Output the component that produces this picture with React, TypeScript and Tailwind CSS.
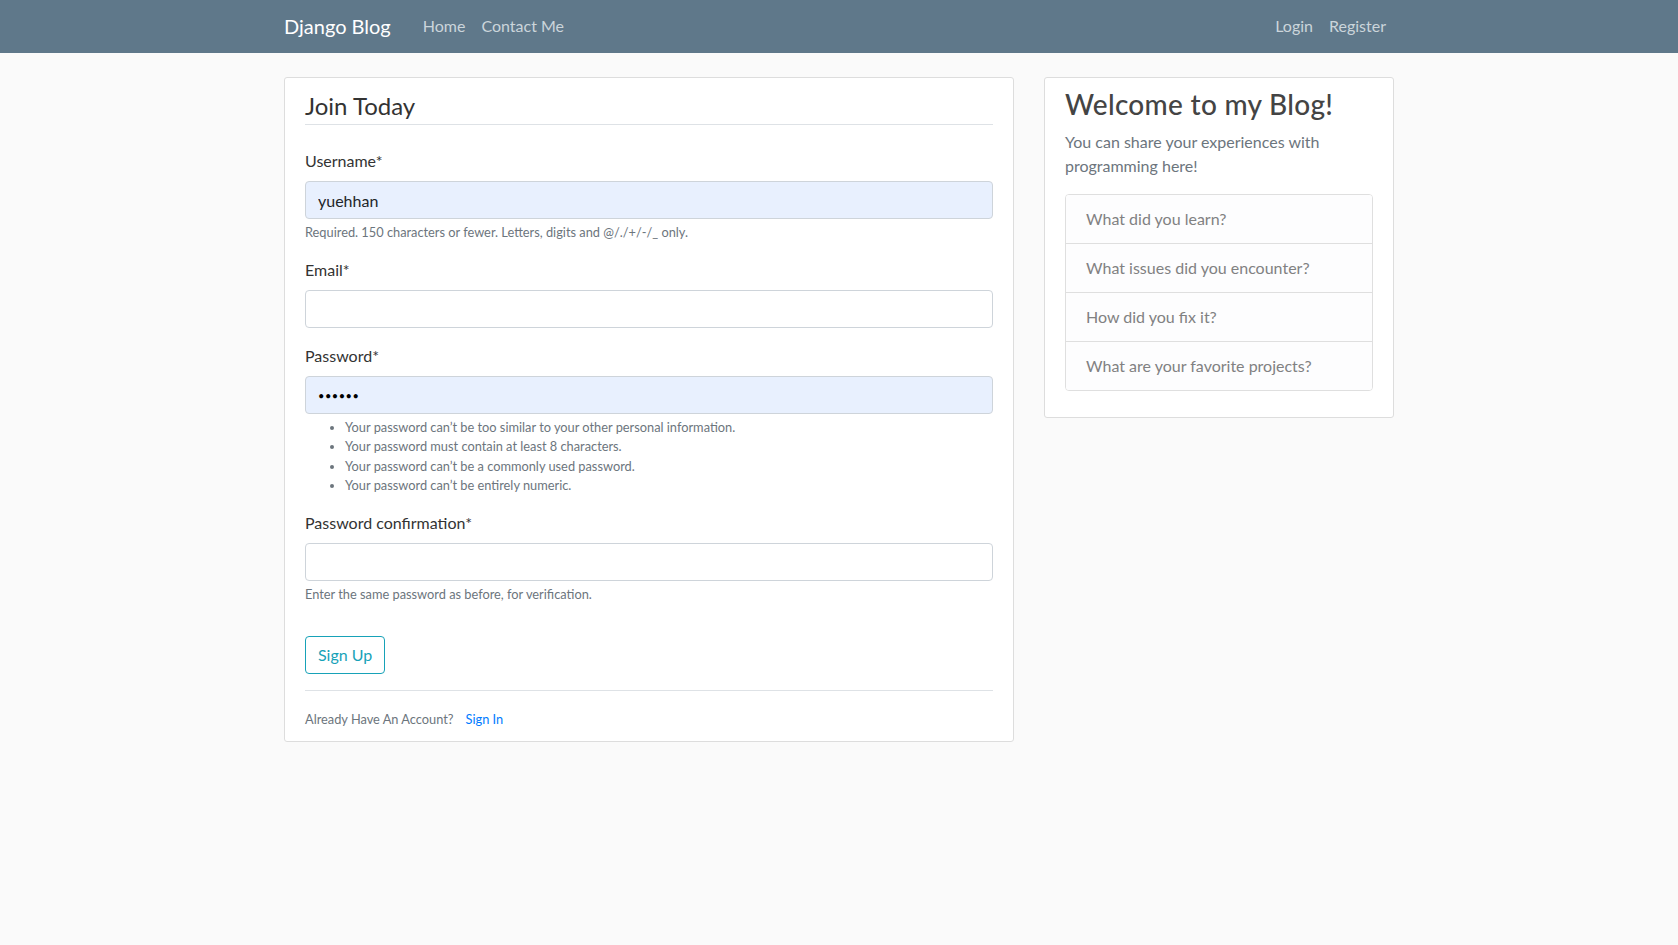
import React from "react";

const font = "font-['Lato','Open_Sans',sans-serif]";

function Field({
  label,
  value,
  autofill,
  dots,
  children,
}: {
  label: string;
  value?: string;
  autofill?: boolean;
  dots?: boolean;
  children?: React.ReactNode;
}) {
  return (
    <div className="mb-4">
      <label className="block text-[16px] leading-6 mb-2 text-[#333]">{label}</label>
      <input
        readOnly
        value={value ?? ""}
        className={`block w-full h-[38px] px-3 rounded-[4px] border border-[#ced4da] outline-none ${
          dots ? "text-[11px] text-black tracking-[0.5px]" : "text-[16px] text-[#212529]"
        } ${autofill ? "bg-[#e8f0fe]" : "bg-white"}`}
      />
      {children}
    </div>
  );
}

export default function App() {
  const pwHelp = [
    "Your password can\u2019t be too similar to your other personal information.",
    "Your password must contain at least 8 characters.",
    "Your password can\u2019t be a commonly used password.",
    "Your password can\u2019t be entirely numeric.",
  ];
  const items = [
    "What did you learn?",
    "What issues did you encounter?",
    "How did you fix it?",
    "What are your favorite projects?",
  ];
  return (
    <div className={`min-h-screen bg-[#fafafa] text-[#333] ${font}`}>
      <header className="h-[53px] bg-[#5f788a]">
        <div className="w-[1110px] mx-auto h-full flex items-center pb-[2px]">
          <a className="text-[20px] text-white mr-6">Django Blog</a>
          <nav className="flex text-[16px] text-[#cbd5db]">
            <a className="px-2">Home</a>
            <a className="px-2">Contact Me</a>
          </nav>
          <nav className="ml-auto flex text-[16px] text-[#cbd5db]">
            <a className="px-2">Login</a>
            <a className="px-2">Register</a>
          </nav>
        </div>
      </header>

      <main className="w-[1110px] mx-auto pt-6 flex items-start gap-[30px]">
        <section className="w-[730px] bg-white border border-[#ddd] rounded-[3px] px-5 py-[10px]">
          <div className="text-[24px] leading-[36px] border-b border-[#dee2e6] mb-6 text-[#333]">
            Join Today
          </div>
          <Field label="Username*" value="yuehhan" autofill>
            <p className="mt-1 text-[12.8px] leading-[19.2px] text-[#6c757d]">
              Required. 150 characters or fewer. Letters, digits and @/./+/-/_ only.
            </p>
          </Field>
          <Field label="Email*" />
          <Field label="Password*" value={"\u2022\u2022\u2022\u2022\u2022\u2022"} autofill dots>
            <ul className="mt-1 pl-10 list-disc text-[12.8px] leading-[19.2px] text-[#6c757d]">
              {pwHelp.map((t) => (
                <li key={t}>{t}</li>
              ))}
            </ul>
          </Field>
          <Field label="Password confirmation*">
            <p className="mt-1 text-[12.8px] leading-[19.2px] text-[#6c757d]">
              Enter the same password as before, for verification.
            </p>
          </Field>
          <div className="pt-4 mb-4 flex">
            <button className="h-[38px] px-3 rounded-[4px] border border-[#17a2b8] text-[#17a2b8] text-[16px] bg-transparent">
              Sign Up
            </button>
          </div>
          <div className="border-t border-[#dee2e6] pt-4 h-[41px] flex items-center pb-0">
            <span className="text-[12.8px] leading-6 text-[#6c757d]">Already Have An Account?</span>
            <a className="ml-[12px] text-[12.8px] leading-6 text-[#007bff]">Sign In</a>
          </div>
        </section>

        <aside className="w-[350px] bg-white border border-[#ddd] rounded-[3px] px-5 py-[10px]">
          <h3 className="text-[28px] leading-[1.2] font-medium tracking-[0.3px] text-[#444] mb-2">
            Welcome to my Blog!
          </h3>
          <p className="text-[16px] leading-6 text-[#6c757d] mb-4">
            You can share your experiences with programming here!
          </p>
          <ul className="rounded-[4px] border border-[#dfdfdf] overflow-hidden">
            {items.map((t, i) => (
              <li
                key={t}
                className={`px-5 py-3 leading-6 text-[16px] bg-[#fdfdfe] text-[#818182] ${
                  i < items.length - 1 ? "border-b border-[#dfdfdf]" : ""
                }`}
              >
                {t}
              </li>
            ))}
          </ul>
          <div className="h-4" />
        </aside>
      </main>
    </div>
  );
}
